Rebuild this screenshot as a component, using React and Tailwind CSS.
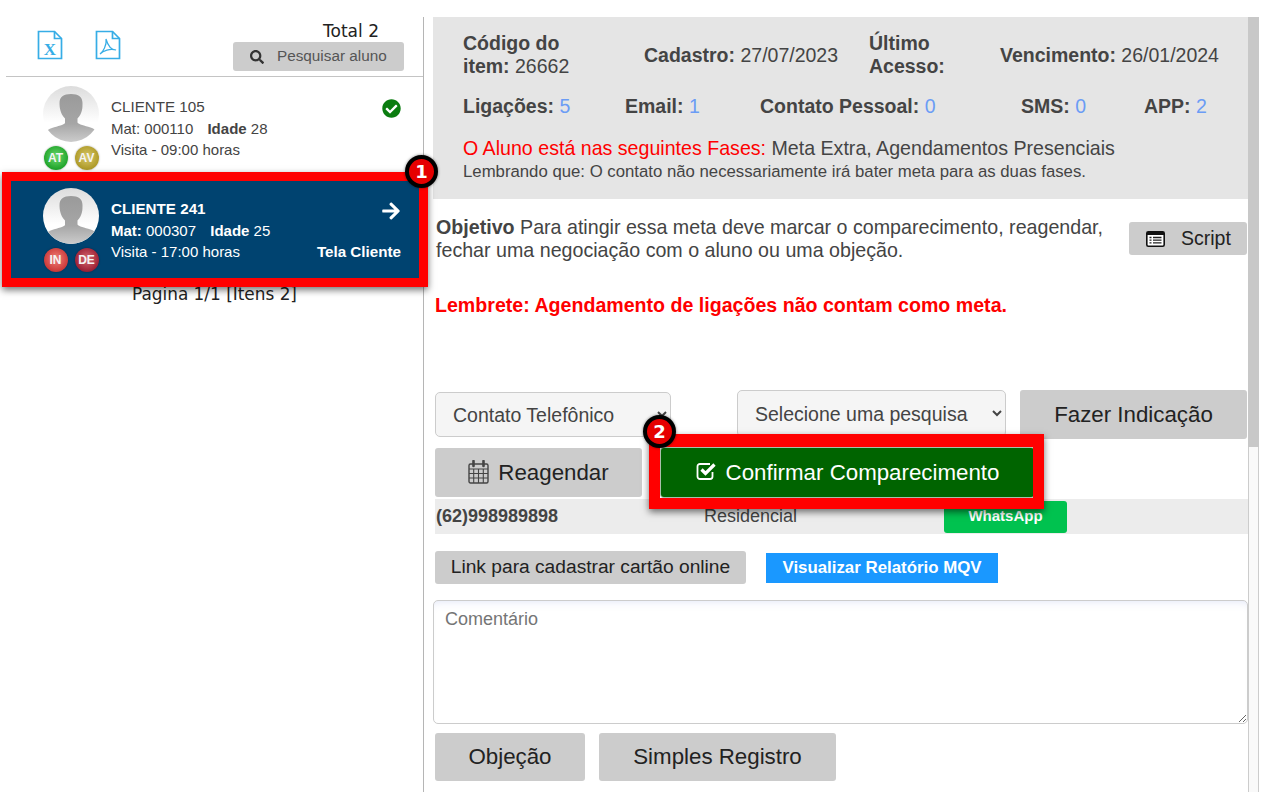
import React from "react";
import { FaSearch, FaCheckCircle, FaArrowRight } from "react-icons/fa";

function Avatar({ id }) {
  return (
    <svg width="56" height="56" viewBox="0 0 56 56" className="shrink-0">
      <defs>
        <linearGradient id={"bg" + id} x1="0" y1="0" x2="0" y2="1">
          <stop offset="0" stopColor="#dcdcdc" />
          <stop offset="0.65" stopColor="#ffffff" />
        </linearGradient>
        <linearGradient id={"fg" + id} x1="0" y1="0" x2="0" y2="1">
          <stop offset="0" stopColor="#9a9a9a" />
          <stop offset="0.6" stopColor="#a6a6a6" />
          <stop offset="1" stopColor="#cfcfcf" />
        </linearGradient>
        <clipPath id={"cp" + id}>
          <circle cx="28" cy="28" r="28" />
        </clipPath>
      </defs>
      <circle cx="28" cy="28" r="28" fill={`url(#bg${id})`} />
      <path
        clipPath={`url(#cp${id})`}
        fill={`url(#fg${id})`}
        d="M16.500 17c0-6 4-9 11.500-9s11.500 3 11.500 9c0 3 0 5-.5 7-.7 3-2 6-4.500 8.500v4c1 2 7 3 13 5 3 1 5 2 6 4v12H3V46c1-2 3-3 6-4 6-2 12-3 13-5v-4.500C19.500 30 18 27 17.300 24c-.5-2-.8-4-.8-7z"
      />
    </svg>
  );
}

function Dot({ label, from, to }) {
  return (
    <div
      className="w-[24px] h-[24px] rounded-full flex items-center justify-center text-[12px] font-bold text-[#f4f4f4] shadow-[0_0_2px_rgba(0,0,0,0.35)]"
      style={{ background: `radial-gradient(circle at 50% 45%, ${to} 0%, ${from} 85%)` }}
    >
      {label}
    </div>
  );
}

function Callout({ n, className }) {
  return (
    <div
      className={
        "absolute w-[33px] h-[33px] rounded-full bg-[#e60000] border-[4px] border-black flex items-center justify-center text-white font-bold text-[18px] z-30 shadow-[0_0_3px_rgba(0,0,0,0.5)] " +
        className
      }
      style={{ fontFamily: '"DejaVu Sans", sans-serif' }}
    >
      {n}
    </div>
  );
}

function FileIcon({ children }) {
  return (
    <svg width="26" height="30" viewBox="0 0 26 30" fill="none" stroke="#36ade6" strokeWidth="1.700">
      <path d="M1.500 1.500h16l7 7v20h-23z" fill="#fff" />
      <path d="M17.500 1.500v7h7" />
      {children}
    </svg>
  );
}

function CalendarIcon() {
  return (
    <svg width="21" height="24" viewBox="0 0 21 24" fill="none" stroke="#444" strokeWidth="1.400" className="-mt-[2px]">
      <rect x="1" y="4" width="19" height="19" rx="1.500" />
      <path d="M1 9h19M1 13.500h19M1 18h19M5.700 9v14M10.500 9v14M15.300 9v14" strokeWidth="1.100" />
      <path d="M5.500 1v5M15.500 1v5" strokeWidth="2.600" strokeLinecap="round" />
    </svg>
  );
}

function CheckSquareIcon() {
  return (
    <svg width="22" height="20" viewBox="0 0 22 20" fill="none" stroke="#fff" className="-mt-[4px]">
      <path d="M16.500 11v4.500a2.500 2.500 0 0 1-2.500 2.500H4a2.500 2.500 0 0 1-2.500-2.500V5.500A2.500 2.500 0 0 1 4 3h10" strokeWidth="1.800" />
      <path d="M5.500 8.500l4 4 9-9" strokeWidth="3.200" />
    </svg>
  );
}

function ScriptIcon() {
  return (
    <svg width="19" height="16" viewBox="0 0 19 16">
      <rect x="0.800" y="0.800" width="17.400" height="14.400" rx="1.500" fill="#fff" stroke="#111" strokeWidth="1.600" />
      <rect x="1" y="1" width="17" height="3" fill="#111" />
      <path d="M3.500 6.500h2M7 6.500h8.500M3.500 9.200h2M7 9.200h8.500M3.500 11.900h2M7 11.900h8.500" stroke="#222" strokeWidth="1.300" />
    </svg>
  );
}

function Num({ children }) {
  return <span className="text-[#6b9cf5]">{children}</span>;
}

export default function App() {
  return (
    <div
      className="relative flex w-[1288px] h-[792px] overflow-hidden bg-white text-[#444444]"
      style={{ fontFamily: '"Liberation Sans", Arial, sans-serif' }}
    >
      {/* Left column */}
      <div className="w-[423px] shrink-0 pl-[6px] flex flex-col">
        <div className="relative h-[77px] border-b border-[#c4c4c4] flex shrink-0">
          <div className="flex gap-[32px] pl-[31px] pt-[30px]">
            <FileIcon>
              <text x="13" y="25" textAnchor="middle" fontFamily="'Liberation Serif', serif" fontWeight="700" fontSize="17" fill="#36ade6" stroke="none">
                X
              </text>
            </FileIcon>
            <FileIcon>
              <path d="M11 9c1 6-3 13-6 15 3-3 10-6 16-4-4 0-8-4-10-11z" strokeWidth="1.200" />
            </FileIcon>
          </div>
          <div className="ml-auto mr-[19px] flex flex-col items-end pt-[21px]">
            <div className="h-[21px] pr-[25px] text-[17px] leading-[21px] text-[#222222]" style={{ fontFamily: '"DejaVu Sans", sans-serif' }}>
              Total 2
            </div>
            <div className="w-[171px] h-[29px] bg-[#cccccc] rounded-[3px] flex items-center pl-[17px] text-[15.300px] text-[#555555]">
              <FaSearch className="w-[14px] h-[14px] text-[#333333]" />
              <span className="ml-[13px]">Pesquisar aluno</span>
            </div>
          </div>
        </div>

        <div className="h-[104px] shrink-0 flex pl-[37px] pt-[9px] pr-[22px]">
          <div className="w-[56px] flex flex-col items-center">
            <Avatar id="a" />
            <div className="flex gap-[7px] mt-[4px]">
              <Dot label="AT" from="#0f9a1c" to="#6fd86f" />
              <Dot label="AV" from="#a5901a" to="#d8c86a" />
            </div>
          </div>
          <div className="ml-[12px] flex-1 text-[15px] leading-[21.500px] pt-[10px]">
            <div className="flex justify-between items-start h-[21.500px]">
              <span className="text-[15.200px]">CLIENTE 105</span>
              <FaCheckCircle className="w-[19px] h-[19px] text-[#0b7d10] mt-[3px]" />
            </div>
            <div>
              Mat: 000110 <b className="ml-[10px]">Idade</b> 28
            </div>
            <div>Visita - 09:00 horas</div>
          </div>
        </div>

        <div className="relative ml-[5px] mr-[4px] h-[97px] shrink-0 bg-[#004370] text-white flex pl-[32px] pt-[7px] pr-[18px]">
          <div className="absolute -left-[9px] -right-[9px] -top-[9px] -bottom-[9px] border-[9px] border-[#ff0000] shadow-[0_3px_7px_rgba(0,0,0,0.55)]" />
          <Callout n="1" className="-right-[19px] -top-[26px]" />
          <div className="w-[56px] flex flex-col items-center">
            <Avatar id="b" />
            <div className="flex gap-[7px] mt-[4px]">
              <Dot label="IN" from="#c42a2a" to="#f0807a" />
              <Dot label="DE" from="#8e1028" to="#d86a70" />
            </div>
          </div>
          <div className="ml-[12px] flex-1 text-[15px] leading-[21.500px] pt-[10px]">
            <div className="flex justify-between items-start h-[21.500px]">
              <b className="text-[15.200px]">CLIENTE 241</b>
              <FaArrowRight className="w-[20px] h-[20px] mt-[3px]" />
            </div>
            <div>
              <b>Mat:</b> 000307 <b className="ml-[10px]">Idade</b> 25
            </div>
            <div className="flex justify-between">
              <span>Visita - 17:00 horas</span>
              <b className="text-[15.200px]">Tela Cliente</b>
            </div>
          </div>
        </div>

        <div className="mt-[6px] pl-[126px] text-[16.900px] leading-[20px] text-[#222222]" style={{ fontFamily: '"DejaVu Sans", sans-serif' }}>
          Pagina 1/1 [Itens 2]
        </div>
      </div>

      {/* Right column */}
      <div className="mt-[17px] w-[825px] shrink-0 border-l border-[#b5b5b5] pl-[9px] flex flex-col">
        <div className="h-[182px] shrink-0 bg-[#e5e5e5] pl-[30px] pt-[15px] text-[19.500px] leading-[23px]">
          <div className="flex items-center h-[46px]">
            <div className="w-[181px]">
              <b>Código do</b>
              <br />
              <b>item:</b> 26662
            </div>
            <div className="w-[225px]">
              <b>Cadastro:</b> 27/07/2023
            </div>
            <div className="w-[131px]">
              <b>Último</b>
              <br />
              <b>Acesso:</b>
            </div>
            <div>
              <b>Vencimento:</b> 26/01/2024
            </div>
          </div>
          <div className="flex mt-[17px]">
            <div className="w-[162px]">
              <b>Ligações:</b> <Num>5</Num>
            </div>
            <div className="w-[135px]">
              <b>Email:</b> <Num>1</Num>
            </div>
            <div className="w-[261px]">
              <b>Contato Pessoal:</b> <Num>0</Num>
            </div>
            <div className="w-[123px]">
              <b>SMS:</b> <Num>0</Num>
            </div>
            <div>
              <b>APP:</b> <Num>2</Num>
            </div>
          </div>
          <div className="mt-[19px] text-[19.620px]">
            <span className="text-[#ff0000]">O Aluno está nas seguintes Fases:</span> Meta Extra, Agendamentos Presenciais
          </div>
          <div className="text-[16.750px] leading-[20px] mt-[2px]">Lembrando que: O contato não necessariamente irá bater meta para as duas fases.</div>
        </div>

        <div className="flex items-start pl-[3px] pr-[1px] mt-[17px] text-[19.650px] leading-[23px]">
          <div className="flex-1">
            <b>Objetivo</b> Para atingir essa meta deve marcar o comparecimento, reagendar,
            <br />
            fechar uma negociação com o aluno ou uma objeção.
          </div>
          <div className="mt-[6px] w-[118px] h-[33px] bg-[#cccccc] rounded-[3px] flex items-center pl-[17px] text-[19.500px] text-[#222222]">
            <ScriptIcon />
            <span className="ml-[16px]">Script</span>
          </div>
        </div>

        <div className="ml-[2px] mt-[32px] text-[19.600px] leading-[23px] font-bold text-[#ff0000]">
          Lembrete: Agendamento de ligações não contam como meta.
        </div>

        <div className="flex items-start ml-[2px] mt-[73px] h-[49px] shrink-0 text-[19.500px] text-[#444444]">
          <select className="mt-[2px] w-[236px] h-[45px] pl-[13px] bg-[#f5f5f5] border border-[#cccccc] rounded-[5px]" defaultValue="a">
            <option value="a">Contato Telefônico</option>
          </select>
          <select className="ml-[66px] w-[269px] h-[47px] pl-[13px] bg-[#f5f5f5] border border-[#cccccc] rounded-[5px]" defaultValue="a">
            <option value="a">Selecione uma pesquisa</option>
          </select>
          <div className="ml-[14px] w-[227px] h-[49px] bg-[#cccccc] rounded-[3px] flex items-center justify-center text-[22.300px] text-[#222222]">
            Fazer Indicação
          </div>
        </div>

        <div className="flex ml-[2px] mt-[9px] h-[49px] shrink-0 text-[22.300px]">
          <div className="w-[207px] bg-[#cccccc] rounded-[3px] flex items-center justify-center gap-[9px] text-[#222222]">
            <CalendarIcon />
            Reagendar
          </div>
          <div className="relative ml-[19px] w-[373px] bg-[#006400] rounded-[3px] ring-1 ring-[#a9bfa9] flex items-center justify-center gap-[8px] text-white z-20">
            <div className="absolute -left-[12px] -right-[10px] -top-[14px] -bottom-[12px] border-x-[11px] border-t-[13px] border-b-[11px] border-[#ff0000] shadow-[0_3px_7px_rgba(0,0,0,0.55)]" />
            <Callout n="2" className="-left-[18px] -top-[33px]" />
            <CheckSquareIcon />
            Confirmar Comparecimento
          </div>
        </div>

        <div className="flex items-center ml-[2px] mt-[2px] h-[35px] shrink-0 bg-[#ececec] text-[18px]">
          <b className="w-[269px] pl-[1px]">(62)998989898</b>
          <span className="w-[240px]">Residencial</span>
          <div className="w-[123px] h-[32px] bg-[#00c24f] rounded-[3px] flex items-center justify-center text-[15px] font-bold text-white">
            WhatsApp
          </div>
        </div>

        <div className="flex items-start ml-[2px] mt-[17px] h-[33px] shrink-0">
          <div className="w-[311px] h-[33px] bg-[#cccccc] rounded-[3px] flex items-center justify-center text-[19.200px] text-[#222222]">
            Link para cadastrar cartão online
          </div>
          <div className="ml-[20px] mt-[2px] w-[232px] h-[30px] bg-[#1a98ff] flex items-center justify-center text-[16.850px] font-bold text-white">
            Visualizar Relatório MQV
          </div>
        </div>

        <textarea
          readOnly
          placeholder="Comentário"
          className="mt-[16px] w-full h-[124px] shrink-0 border border-[#cccccc] rounded-[5px] px-[11px] py-[8px] text-[18px] leading-[20px] placeholder:text-[#757575] shadow-[inset_0_8px_10px_-8px_rgba(120,140,220,0.25)]"
        />

        <div className="flex ml-[2px] mt-[9px] h-[48px] shrink-0 text-[22.300px] text-[#222222]">
          <div className="w-[150px] bg-[#cccccc] rounded-[3px] flex items-center justify-center">Objeção</div>
          <div className="ml-[14px] w-[237px] bg-[#cccccc] rounded-[3px] flex items-center justify-center">Simples Registro</div>
        </div>
      </div>

      {/* Scrollbar */}
      <div className="mt-[17px] w-[11px] shrink-0 bg-[#f9f9f9] border-x border-[#cccccc]">
        <div className="-mx-[1px] h-[430px] bg-[#c8c8c8]" />
      </div>
    </div>
  );
}
